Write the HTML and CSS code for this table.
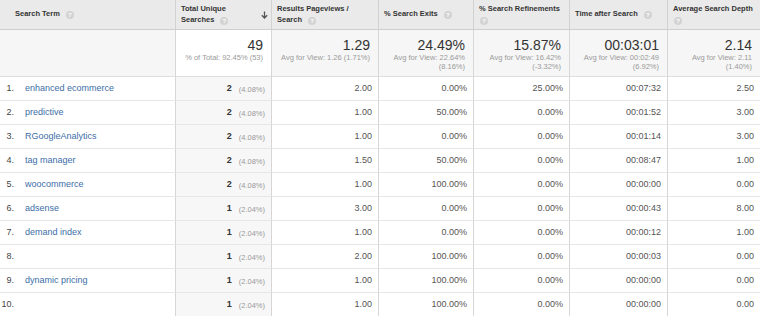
FILE: index.html
```html
<!DOCTYPE html>
<html>
<head>
<meta charset="utf-8">
<link rel="stylesheet" href="styles.css">
</head>
<body>
<div class="report">
  <div class="row head">
    <div class="cell h first"><span class="ht">Search Term<span class="help">?</span></span></div>
    <div class="cell h sorted"><span class="ht">Total Unique<br>Searches<span class="help">?</span></span>
      <svg class="sort" width="7" height="8" viewBox="0 0 7 8"><path d="M3.5 0.5V7M0.8 4.3L3.5 7L6.2 4.3" fill="none" stroke="#555" stroke-width="1.3"/></svg></div>
    <div class="cell h"><span class="ht">Results Pageviews /<br>Search<span class="help">?</span></span></div>
    <div class="cell h"><span class="ht">% Search Exits<span class="help">?</span></span></div>
    <div class="cell h"><span class="ht">% Search Refinements<br><span class="help nomargin">?</span></span></div>
    <div class="cell h"><span class="ht">Time after Search<span class="help">?</span></span></div>
    <div class="cell h last"><span class="ht">Average Search Depth<br><span class="help nomargin">?</span></span></div>
  </div>
  <div class="row summary">
    <div class="cell s first"></div>
    <div class="cell s sorted"><div class="big">49</div><div class="sub">% of Total: 92.45% (53)</div></div>
    <div class="cell s"><div class="big">1.29</div><div class="sub">Avg for View: 1.26 (1.71%)</div></div>
    <div class="cell s"><div class="big">24.49%</div><div class="sub">Avg for View: 22.64%<br>(8.16%)</div></div>
    <div class="cell s"><div class="big">15.87%</div><div class="sub">Avg for View: 16.42%<br>(-3.32%)</div></div>
    <div class="cell s"><div class="big">00:03:01</div><div class="sub">Avg for View: 00:02:49<br>(6.92%)</div></div>
    <div class="cell s last"><div class="big">2.14</div><div class="sub">Avg for View: 2.11<br>(1.40%)</div></div>
  </div>

  <div class="row data">
    <div class="cell d first"><span class="rank">1.</span><a class="term">enhanced ecommerce</a></div>
    <div class="cell d sorted"><b class="cnt">2</b><span class="pct">(4.08%)</span></div>
    <div class="cell d">2.00</div><div class="cell d">0.00%</div><div class="cell d">25.00%</div><div class="cell d">00:07:32</div><div class="cell d last">2.50</div>
  </div>
  <div class="row data">
    <div class="cell d first"><span class="rank">2.</span><a class="term">predictive</a></div>
    <div class="cell d sorted"><b class="cnt">2</b><span class="pct">(4.08%)</span></div>
    <div class="cell d">1.00</div><div class="cell d">50.00%</div><div class="cell d">0.00%</div><div class="cell d">00:01:52</div><div class="cell d last">3.00</div>
  </div>
  <div class="row data">
    <div class="cell d first"><span class="rank">3.</span><a class="term">RGoogleAnalytics</a></div>
    <div class="cell d sorted"><b class="cnt">2</b><span class="pct">(4.08%)</span></div>
    <div class="cell d">1.00</div><div class="cell d">0.00%</div><div class="cell d">0.00%</div><div class="cell d">00:01:14</div><div class="cell d last">3.00</div>
  </div>
  <div class="row data">
    <div class="cell d first"><span class="rank">4.</span><a class="term">tag manager</a></div>
    <div class="cell d sorted"><b class="cnt">2</b><span class="pct">(4.08%)</span></div>
    <div class="cell d">1.50</div><div class="cell d">50.00%</div><div class="cell d">0.00%</div><div class="cell d">00:08:47</div><div class="cell d last">1.00</div>
  </div>
  <div class="row data">
    <div class="cell d first"><span class="rank">5.</span><a class="term">woocommerce</a></div>
    <div class="cell d sorted"><b class="cnt">2</b><span class="pct">(4.08%)</span></div>
    <div class="cell d">1.00</div><div class="cell d">100.00%</div><div class="cell d">0.00%</div><div class="cell d">00:00:00</div><div class="cell d last">0.00</div>
  </div>
  <div class="row data">
    <div class="cell d first"><span class="rank">6.</span><a class="term">adsense</a></div>
    <div class="cell d sorted"><b class="cnt">1</b><span class="pct">(2.04%)</span></div>
    <div class="cell d">3.00</div><div class="cell d">0.00%</div><div class="cell d">0.00%</div><div class="cell d">00:00:43</div><div class="cell d last">8.00</div>
  </div>
  <div class="row data">
    <div class="cell d first"><span class="rank">7.</span><a class="term">demand index</a></div>
    <div class="cell d sorted"><b class="cnt">1</b><span class="pct">(2.04%)</span></div>
    <div class="cell d">1.00</div><div class="cell d">0.00%</div><div class="cell d">0.00%</div><div class="cell d">00:00:12</div><div class="cell d last">1.00</div>
  </div>
  <div class="row data">
    <div class="cell d first"><span class="rank">8.</span></div>
    <div class="cell d sorted"><b class="cnt">1</b><span class="pct">(2.04%)</span></div>
    <div class="cell d">2.00</div><div class="cell d">100.00%</div><div class="cell d">0.00%</div><div class="cell d">00:00:03</div><div class="cell d last">0.00</div>
  </div>
  <div class="row data">
    <div class="cell d first"><span class="rank">9.</span><a class="term">dynamic pricing</a></div>
    <div class="cell d sorted"><b class="cnt">1</b><span class="pct">(2.04%)</span></div>
    <div class="cell d">1.00</div><div class="cell d">100.00%</div><div class="cell d">0.00%</div><div class="cell d">00:00:00</div><div class="cell d last">0.00</div>
  </div>
  <div class="row data">
    <div class="cell d first"><span class="rank">10.</span></div>
    <div class="cell d sorted"><b class="cnt">1</b><span class="pct">(2.04%)</span></div>
    <div class="cell d">1.00</div><div class="cell d">100.00%</div><div class="cell d">0.00%</div><div class="cell d">00:00:00</div><div class="cell d last">0.00</div>
  </div>
</div>
</body>
</html>
```

FILE: styles.css
```css
html, body {
  margin: 0;
  padding: 0;
  background: #ffffff;
}
.report {
  width: 760px;
  font-family: "Liberation Sans", Arial, sans-serif;
  color: #333333;
}
.row {
  display: grid;
  grid-template-columns: 176px 96px 107px 95px 96px 98px 92px;
}
.cell {
  box-sizing: border-box;
  border-right: 1px solid #d6d6d6;
  white-space: nowrap;
}
.cell.last {
  border-right: none;
}

/* header */
.head .cell {
  height: 30px;
  background: #eaeaea;
  border-bottom: 1px solid #cfcfcf;
  border-right-color: #d2d2d2;
  padding-left: 5px;
  display: flex;
  align-items: center;
  justify-content: space-between;
  font-size: 7.5px;
  font-weight: bold;
  line-height: 11.5px;
  color: #333333;
}
.head .cell.first {
  padding-left: 15px;
}
.ht {
  display: block;
  padding-bottom: 1px;
}
.help {
  display: inline-block;
  width: 8px;
  height: 8px;
  border-radius: 50%;
  background: #d3d3d3;
  color: #ffffff;
  font-size: 6px;
  line-height: 8px;
  text-align: center;
  font-weight: bold;
  margin-left: 6px;
  vertical-align: -1px;
}
.help.nomargin {
  margin-left: 1px;
}
.sort {
  margin-right: 3px;
  flex: none;
}

/* summary */
.summary .cell {
  height: 47px;
  background: #f6f6f6;
  border-bottom: 1px solid #dedede;
  padding: 8px 8px 0 0;
  text-align: right;
}
.summary .cell.sorted {
  background: #ffffff;
}
.big {
  font-size: 14px;
  line-height: 15px;
  color: #333333;
}
.sub {
  font-size: 7.5px;
  line-height: 9px;
  color: #9a9a9a;
}

/* data */
.data .cell {
  height: 24px;
  border-bottom: 1px solid #e6e6e6;
  padding-right: 6px;
  font-size: 9px;
  line-height: 23px;
  text-align: right;
  color: #555555;
}
.data .cell.sorted {
  background: #f7f7f7;
  display: flex;
  justify-content: flex-end;
  align-items: center;
  gap: 7px;
}
.data .cell.first {
  text-align: left;
  padding-right: 0;
}
.rank {
  display: inline-block;
  width: 14px;
  text-align: right;
  color: #444444;
}
.term {
  margin-left: 11px;
  color: #3d6ea8;
  text-decoration: none;
}
.cnt {
  font-size: 9px;
  color: #333333;
  line-height: 23px;
}
.pct {
  font-size: 7.5px;
  color: #999999;
  line-height: 23px;
  padding-top: 1px;
}
```
